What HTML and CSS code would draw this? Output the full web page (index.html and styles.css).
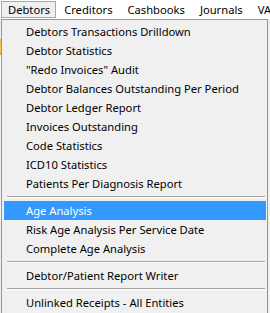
FILE: index.html
```html
<!DOCTYPE html>
<html>
<head>
<meta charset="utf-8">
<link rel="stylesheet" href="styles.css">
</head>
<body>
<div class="menubar">
  <span class="top active">Debtors</span>
  <span class="top">Creditors</span>
  <span class="top">Cashbooks</span>
  <span class="top">Journals</span>
  <span class="top">VAT</span>
</div>
<div class="desk">
  <div class="strip"></div>
  <ul class="dropdown">
    <li class="item">Debtors Transactions Drilldown</li>
    <li class="item">Debtor Statistics</li>
    <li class="item">"Redo Invoices" Audit</li>
    <li class="item">Debtor Balances Outstanding Per Period</li>
    <li class="item">Debtor Ledger Report</li>
    <li class="item">Invoices Outstanding</li>
    <li class="item">Code Statistics</li>
    <li class="item">ICD10 Statistics</li>
    <li class="item">Patients Per Diagnosis Report</li>
    <li class="sep"></li>
    <li class="item hl">Age Analysis</li>
    <li class="item">Risk Age Analysis Per Service Date</li>
    <li class="item">Complete Age Analysis</li>
    <li class="sep"></li>
    <li class="item">Debtor/Patient Report Writer</li>
    <li class="sep"></li>
    <li class="item">Unlinked Receipts - All Entities</li>
  </ul>
</div>
</body>
</html>
```
FILE: styles.css
```css
html, body {
  margin: 0;
  padding: 0;
  width: 270px;
  height: 313px;
  overflow: hidden;
  background: #f0f0f0;
  font-family: "Noto Sans", "Open Sans", sans-serif;
  font-size: 11.2px;
  color: #000;
}
.menubar {
  display: flex;
  height: 19px;
  background: #ffffff;
  white-space: nowrap;
  overflow: hidden;
}
.top {
  display: block;
  flex: none;
  height: 17px;
  line-height: 15px;
  padding: 0 6px 0 7px;
  margin-top: 1px;
  border: 1px solid transparent;
  box-sizing: border-box;
}
.top.active {
  margin-left: 1px;
  padding: 0 5px 0 6px;
  border-color: #a8a8a8;
  background: #f0f0f0;
}
.desk {
  display: flex;
  height: 294px;
}
.strip {
  width: 1px;
  background: linear-gradient(#f0f0f0 0, #f0f0f0 20px, #f6b03c 20px, #f8d060 30px, #f0a030 36px, #ffffff 36px, #ffffff 60px, #f0f0f0 60px);
}
.dropdown {
  list-style: none;
  margin: 0;
  padding: 2px 1px 0 2px;
  width: 267px;
  box-sizing: border-box;
  border: 1px solid #979797;
  border-bottom: none;
  background: #f0f0f0;
}
.item {
  height: 19px;
  line-height: 19px;
  padding-left: 22px;
  white-space: nowrap;
}
.item.hl {
  background: #3399ff;
  color: #ffffff;
}
.sep {
  height: 0;
  margin: 3px 1px 3px 3px;
  border-top: 1px solid #a0a0a0;
  border-bottom: 1px solid #ffffff;
}
```
